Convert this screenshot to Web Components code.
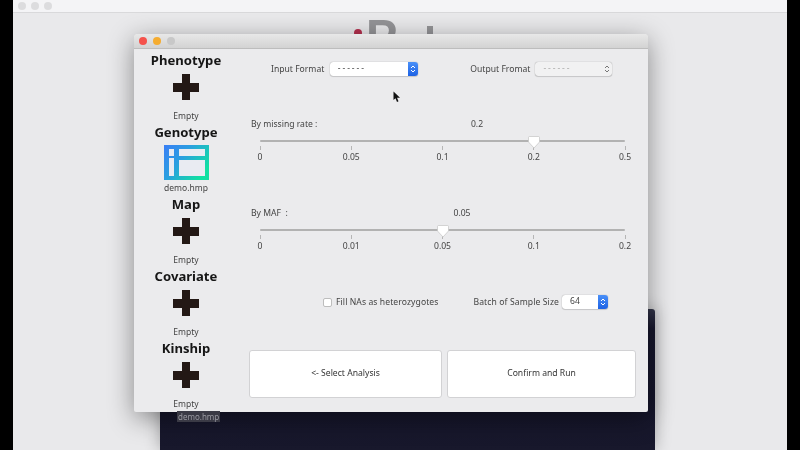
<!DOCTYPE html>
<html>
<head>
<meta charset="utf-8">
<style>
  html, body { margin: 0; height: 100%; background: #000; overflow: hidden; }
  body { font-family: "Noto Sans", "DejaVu Sans", sans-serif; }
</style>
</head>
<body>
<template id="tpl-back-window">
  <style>
    :host { display: block; position: relative; margin: 0 13px; height: 450px; background: #e9e9eb; overflow: hidden; filter: blur(.35px); }
    .bar { display: flex; align-items: center; gap: 5px; height: 12px; padding-left: 5px; background: #f4f4f6; border-bottom: 1px solid #d9d9db; }
    .bar i { width: 8px; height: 8px; border-radius: 50%; background: #dcdcde; }
    .logo { position: absolute; left: 341px; top: 12px; display: flex; align-items: flex-start; font: 700 47px/47px "Liberation Sans", sans-serif; color: #949497; white-space: nowrap; }
    .dot { position: absolute; left: 0; top: 17px; width: 8px; height: 8px; border-radius: 50%; background: #b5304e; }
    .stem { position: absolute; left: 73px; top: 14px; width: 6px; height: 14px; background: #949497; }
    .logo span { margin-left: 12px; }
    .dark { position: absolute; left: 147px; top: 309px; width: 495px; height: 141px; background: linear-gradient(#34364a, #17172c 14%, #15152b 60%, #18182c); border-radius: 3px 3px 0 0; box-shadow: 0 0 16px rgba(0,0,0,.3); }
  </style>
  <div class="bar"><i></i><i></i><i></i></div>
  <div class="logo"><i class="dot"></i><span>P</span><i class="stem"></i></div>
  <div class="dark"></div>
  <slot></slot>
</template>

<template id="tpl-dialog">
  <style>
    :host { display: block; position: absolute; left: 121px; top: 34px; width: 514px; height: 378px; background: #ebebed; border-radius: 4px 4px 2px 2px; box-shadow: 0 6px 26px rgba(0,0,0,.42); overflow: hidden; }
    .title { display: flex; align-items: center; gap: 6px; height: 14px; padding-left: 5px; background: linear-gradient(#e8e8e8, #d3d3d3); border-bottom: 1px solid #bdbdbd; }
    .title i { width: 8px; height: 8px; border-radius: 50%; }
    .content { display: flex; height: 363px; }
  </style>
  <div class="title"><i style="background:#f5524c"></i><i style="background:#f5ac30"></i><i style="background:#c8c8c8"></i></div>
  <div class="content"><slot></slot></div>
</template>

<template id="tpl-file-slot">
  <style>
    :host { display: flex; flex-direction: column; align-items: center; width: 104px; height: 72px; }
    h2 { margin: 0; height: 24px; font-size: 13.1px; line-height: 22px; font-weight: 700; color: #161616; }
    .icon { display: flex; height: 38px; justify-content: center; margin-top: -1px; }
    p { margin: 0; height: 11px; font-size: 8.5px; line-height: 11px; color: #444; }
  </style>
  <h2></h2>
  <div class="icon"><slot></slot></div>
  <p></p>
</template>

<template id="tpl-plus">
  <style>:host { display: block; line-height: 0; margin-top: 2px; }</style>
  <svg width="26" height="26" viewBox="0 0 26 26"><path d="M9 0h8v9h9v9h-9v8H9v-8H0V9h9z" fill="#231815"/></svg>
</template>

<template id="tpl-table-icon">
  <style>:host { display: block; line-height: 0; margin-top: 1px; }</style>
  <svg width="45" height="35" viewBox="0 0 45 35">
    <defs><linearGradient id="g" x1="0" y1="0" x2="1" y2=".6"><stop offset="0" stop-color="#3a7ef6"/><stop offset=".45" stop-color="#2a9fe0"/><stop offset="1" stop-color="#10e0a2"/></linearGradient></defs>
    <rect width="45" height="35" fill="url(#g)"/>
    <rect x="5" y="4" width="5" height="7" fill="#e9ebf2"/>
    <rect x="5" y="13" width="5" height="18" fill="#e9ebf2"/>
    <rect x="15" y="4" width="26" height="7" fill="#e9ebf2"/>
    <rect x="15" y="15" width="26" height="16" fill="#e9ebf2"/>
  </svg>
</template>

<template id="tpl-select">
  <style>
    :host { display: inline-flex; box-sizing: border-box; height: 14px; background: #fff; border-radius: 3px; box-shadow: 0 0 1px rgba(0,0,0,.45), 0 1px 1px rgba(0,0,0,.12); font-size: 8.6px; color: #444; overflow: hidden; }
    .val { flex: 1; padding-left: 8px; line-height: 13px; white-space: nowrap; }
    .arrow { display: flex; align-items: center; justify-content: center; width: 10px; background: linear-gradient(#4a90f8, #1e62e4); }
    svg { display: block; }
    path { fill: none; stroke: #fff; stroke-width: 1; }
    :host([disabled]) { background: #f1f1f2; color: #a9a9a9; }
    :host([disabled]) .arrow { background: none; }
    :host([disabled]) path { stroke: #777; }
  </style>
  <div class="val"><slot></slot></div>
  <div class="arrow"><svg width="6" height="10" viewBox="0 0 6 10"><path d="M1 4L3 2L5 4M1 6L3 8L5 6"/></svg></div>
</template>

<template id="tpl-slider">
  <style>
    :host { display: block; font-size: 8.6px; color: #444; }
    .head { display: flex; height: 12px; line-height: 12px; position: relative; white-space: pre; }
    .val { position: absolute; transform: translateX(-50%); }
    .body { position: relative; margin: 10px 11px 0 9px; height: 26px; }
    .track { height: 2px; background: #b2b2b2; border-radius: 1px; }
    .scale { display: flex; justify-content: space-between; margin-top: 4px; }
    .scale div { width: 0; display: flex; flex-direction: column; align-items: center; }
    .scale u { display: block; width: 1px; height: 4px; background: #b5b5b5; }
    .scale span { margin-top: 1px; line-height: 12px; white-space: nowrap; }
    svg { position: absolute; top: -4px; margin-left: -6px; }
  </style>
  <div class="head"><span class="lab"></span><span class="val"></span></div>
  <div class="body">
    <div class="track"></div>
    <div class="scale"></div>
    <svg width="12" height="13" viewBox="0 0 12 13"><path d="M1.500.5h9a1 1 0 0 1 1 1V6L6 12 .5 6V1.500a1 1 0 0 1 1-1z" fill="#fff" stroke="#c4c4c4" stroke-width=".7"/></svg>
  </div>
</template>

<template id="tpl-checkbox">
  <style>
    :host { display: inline-flex; align-items: center; gap: 4px; font-size: 8.6px; letter-spacing: .08px; color: #444; white-space: nowrap; }
    i { box-sizing: border-box; width: 9px; height: 9px; background: #fff; border: 1px solid #bdbdbd; border-radius: 2px; }
  </style>
  <i></i><slot></slot>
</template>

<template id="tpl-big-button">
  <style>
    :host { display: flex; align-items: center; justify-content: center; box-sizing: border-box; height: 48px; padding-bottom: 3px; background: #fff; border: 1px solid #d2d2d4; border-radius: 3px; font-size: 8.6px; color: #333; white-space: nowrap; }
  </style>
  <slot></slot>
</template>

<template id="tpl-settings">
  <style>
    :host { display: block; flex: 1; font-size: 8.6px; color: #444; }
    .formats { display: flex; align-items: center; height: 14px; margin-top: 13px; white-space: nowrap; }
    .filters { margin: 0 12px 0 13px; }
    .batch { display: flex; align-items: center; height: 14px; margin: 40px 0 0 85px; white-space: nowrap; }
    .actions { display: flex; gap: 5px; margin: 41px 12px 0 11px; }
    .gap1 { height: 42px; }
    .gap2 { height: 41px; }
  </style>
  <div class="formats"><slot name="formats"></slot></div>
  <div class="filters">
    <div class="gap1"></div>
    <slot name="missing"></slot>
    <div class="gap2"></div>
    <slot name="maf"></slot>
  </div>
  <div class="batch"><slot name="batch"></slot></div>
  <div class="actions"><slot name="actions"></slot></div>
</template>

<back-window>
  <dialog-window>
    <div style="width:104px;flex:none">
      <file-slot title-text="Phenotype" caption="Empty"><plus-icon></plus-icon></file-slot>
      <file-slot title-text="Genotype" caption="demo.hmp"><table-icon></table-icon></file-slot>
      <file-slot title-text="Map" caption="Empty"><plus-icon></plus-icon></file-slot>
      <file-slot title-text="Covariate" caption="Empty"><plus-icon></plus-icon></file-slot>
      <file-slot title-text="Kinship" caption="Empty"><plus-icon></plus-icon></file-slot>
    </div>
    <settings-panel>
      <span slot="formats" style="margin-left:33px">Input Format</span>
      <combo-select slot="formats" style="width:88px;margin-left:5.500px;letter-spacing:1.9px">------</combo-select>
      <span slot="formats" style="margin-left:52.500px">Output Fromat</span>
      <combo-select slot="formats" disabled style="width:77px;margin-left:5px;letter-spacing:1.9px">------</combo-select>

      <value-slider slot="missing" label="By missing rate :" value="0.2" value-x="226" ticks="0,0.05,0.1,0.2,0.5" at="3"></value-slider>
      <value-slider slot="maf" label="By MAF  :" value="0.05" value-x="211" ticks="0,0.01,0.05,0.1,0.2" at="2"></value-slider>

      <check-box slot="batch">Fill NAs as heterozygotes</check-box>
      <span slot="batch" style="margin-left:35px;letter-spacing:.1px">Batch of Sample Size</span>
      <combo-select slot="batch" style="width:46px;margin-left:3px">64</combo-select>

      <big-button slot="actions" style="width:193px">&lt;- Select Analysis</big-button>
      <big-button slot="actions" style="width:189px">Confirm and Run</big-button>
    </settings-panel>
  </dialog-window>
  <span style="position:absolute;left:164px;top:411px;padding:0 1px;height:11px;font-size:8px;line-height:11px;color:#9a9aa2;background:#3a3a45">demo.hmp</span>
  <svg style="position:absolute;left:380px;top:91px" width="8" height="12" viewBox="0 0 8 12"><path d="M.5.500L.5 9L2.500 7.300L4 11L5.500 10.300L4 6.800L7 6.800z" fill="#111"/></svg>
</back-window>

<script>
  // every element just clones its template, a few fill in attributes afterwards
  class Base extends HTMLElement {
    constructor() {
      super();
      this.attachShadow({ mode: 'open' });
      const tpl = document.getElementById(this.constructor.tpl);
      this.shadowRoot.appendChild(tpl.content.cloneNode(true));
    }
  }

  class BackWindow extends Base { static tpl = 'tpl-back-window'; }
  class DialogWindow extends Base { static tpl = 'tpl-dialog'; }
  class PlusIcon extends Base { static tpl = 'tpl-plus'; }
  class TableIcon extends Base { static tpl = 'tpl-table-icon'; }
  class ComboSelect extends Base { static tpl = 'tpl-select'; }
  class CheckBox extends Base { static tpl = 'tpl-checkbox'; }
  class BigButton extends Base { static tpl = 'tpl-big-button'; }
  class SettingsPanel extends Base { static tpl = 'tpl-settings'; }

  class FileSlot extends Base {
    static tpl = 'tpl-file-slot';
    connectedCallback() {
      this.shadowRoot.querySelector('h2').textContent = this.getAttribute('title-text');
      this.shadowRoot.querySelector('p').textContent = this.getAttribute('caption');
    }
  }

  class ValueSlider extends Base {
    static tpl = 'tpl-slider';
    connectedCallback() {
      const root = this.shadowRoot;
      const ticks = this.getAttribute('ticks').split(',');
      root.querySelector('.lab').textContent = this.getAttribute('label');
      const val = root.querySelector('.val');
      val.textContent = this.getAttribute('value');
      val.style.left = this.getAttribute('value-x') + 'px';
      root.querySelector('.scale').innerHTML = ticks.map(t => `<div><u></u><span>${t}</span></div>`).join('');
      root.querySelector('svg').style.left = (this.getAttribute('at') / (ticks.length - 1) * 100) + '%';
    }
  }

  customElements.define('back-window', BackWindow);
  customElements.define('dialog-window', DialogWindow);
  customElements.define('plus-icon', PlusIcon);
  customElements.define('table-icon', TableIcon);
  customElements.define('combo-select', ComboSelect);
  customElements.define('check-box', CheckBox);
  customElements.define('big-button', BigButton);
  customElements.define('settings-panel', SettingsPanel);
  customElements.define('file-slot', FileSlot);
  customElements.define('value-slider', ValueSlider);
</script>
</body>
</html>
